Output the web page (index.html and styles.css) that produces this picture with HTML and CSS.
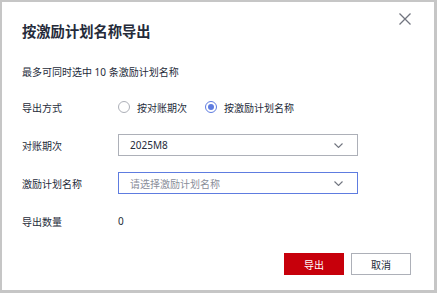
FILE: index.html
```html
<!DOCTYPE html>
<html lang="zh-CN">
<head>
    <meta charset="UTF-8">
    <meta name="viewport" content="width=device-width, initial-scale=1.0">
    <title>按激励计划名称导出</title>
    <link rel="stylesheet" href="styles.css">
</head>
<body>
    <div class="dialog">
        <h1 class="dialog-title">按激励计划名称导出</h1>
        <button class="btn-close" aria-label="关闭">
            <svg width="12" height="12" viewBox="0 0 12 12">
                <path d="M0.5 0.5 L11.5 11.5 M11.5 0.5 L0.5 11.5" stroke="#71757f" stroke-width="1.3" fill="none"/>
            </svg>
        </button>

        <p class="tip">最多可同时选中 10 条激励计划名称</p>

        <div class="form">
            <div class="form-row">
                <span class="form-label">导出方式</span>
                <div class="radio-group">
                    <label class="radio"><span class="radio-dot"></span>按对账期次</label>
                    <label class="radio checked"><span class="radio-dot"></span>按激励计划名称</label>
                </div>
            </div>
            <div class="form-row">
                <span class="form-label">对账期次</span>
                <div class="select">
                    <span class="select-value">2025M8</span>
                    <svg class="chevron" width="9" height="5" viewBox="0 0 9 5">
                        <path d="M0.5 0.5 L4.5 4.5 L8.5 0.5" stroke="#71757f" stroke-width="1.1" fill="none"/>
                    </svg>
                </div>
            </div>
            <div class="form-row">
                <span class="form-label">激励计划名称</span>
                <div class="select active">
                    <span class="select-placeholder">请选择激励计划名称</span>
                    <svg class="chevron" width="9" height="5" viewBox="0 0 9 5">
                        <path d="M0.5 0.5 L4.5 4.5 L8.5 0.5" stroke="#71757f" stroke-width="1.1" fill="none"/>
                    </svg>
                </div>
            </div>
            <div class="form-row">
                <span class="form-label">导出数量</span>
                <span class="count">0</span>
            </div>
        </div>

        <div class="dialog-footer">
            <button class="btn btn-primary">导出</button>
            <button class="btn btn-default">取消</button>
        </div>
    </div>
</body>
</html>
```

FILE: styles.css
```css
:root{
    --cor-texto: #252b3a;
    --cor-cinza: #71757f;
    --cor-borda: #adb0b8;
    --cor-azul: #5e7ce0;
    --cor-vermelho: #c7000b;
    --font-f: "Noto Sans", "Noto Sans CJK SC", sans-serif;
}

*{
    margin: 0px;
    padding: 0px;
    box-sizing: border-box;
}

body{
    background-color: #c6c6c6;
    font-family: var(--font-f);
    color: var(--cor-texto);
    font-size: 10px;
}

.dialog{
    position: relative;
    width: 432px;
    height: 288px;
    margin: 2px 3px 3px 2px;
    background-color: white;
    padding: 20px 23px 0px 20px;
}

.dialog-title{
    font-size: 14.3px;
    font-weight: 700;
    line-height: 20px;
}

.btn-close{
    position: absolute;
    top: 11px;
    right: 23px;
    width: 12px;
    height: 12px;
    border: none;
    background: none;
    display: flex;
}

.tip{
    margin-top: 22px;
    line-height: 16px;
}

.form{
    margin-top: 16px;
    display: flex;
    flex-direction: column;
    gap: 16px;
}

.form-row{
    display: flex;
    align-items: center;
    height: 22px;
}

.form-label{
    width: 96px;
}

.radio-group{
    display: flex;
    gap: 18px;
}

.radio{
    display: flex;
    align-items: center;
    gap: 7px;
}

.radio-dot{
    width: 12px;
    height: 12px;
    border: 1px solid var(--cor-borda);
    border-radius: 50%;
    display: flex;
    align-items: center;
    justify-content: center;
}

.radio.checked .radio-dot{
    border-color: var(--cor-azul);
}

.radio.checked .radio-dot::after{
    content: "";
    width: 6px;
    height: 6px;
    border-radius: 50%;
    background-color: var(--cor-azul);
}

.select{
    width: 240px;
    height: 22px;
    border: 1px solid var(--cor-borda);
    display: flex;
    align-items: center;
    justify-content: space-between;
    padding: 0px 14px 0px 11px;
}

.select.active{
    border-color: var(--cor-azul);
}

.select-placeholder{
    color: #8a8e99;
}

.count{
    padding-left: 0px;
}

.dialog-footer{
    margin-top: 21px;
    display: flex;
    justify-content: flex-end;
    gap: 7px;
}

.btn{
    width: 60px;
    height: 22px;
    font-family: var(--font-f);
    font-size: 10px;
    border: 1px solid var(--cor-borda);
    background-color: white;
    color: var(--cor-texto);
}

.btn-primary{
    background-color: var(--cor-vermelho);
    border-color: var(--cor-vermelho);
    color: white;
}
```
